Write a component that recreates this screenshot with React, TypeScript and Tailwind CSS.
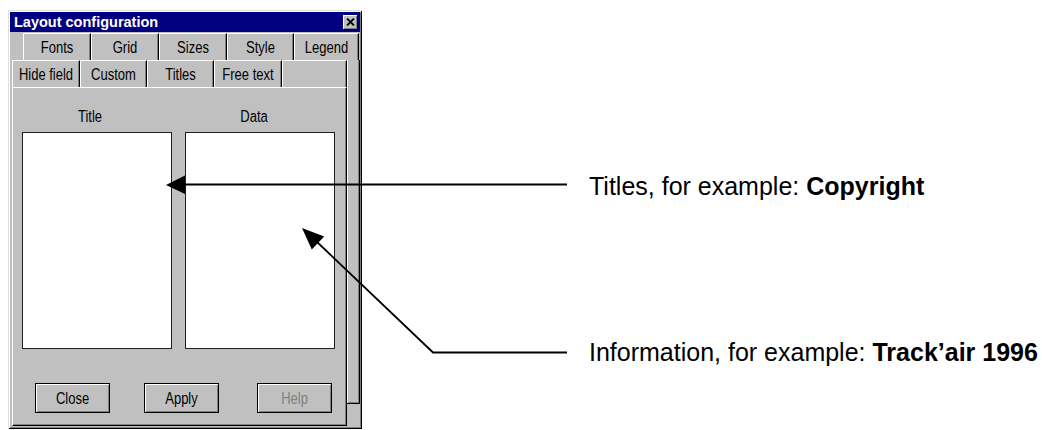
import React from 'react';

const bevelOut = 'shadow-[inset_1px_1px_0_#ffffff,inset_-1px_-1px_0_#808080]';
const dlgText = 'inline-block text-[13px] leading-none scale-y-[1.25]';

const Tab: React.FC<{ label: string; w: string; active?: boolean }> = ({ label, w, active }) => (
  <div
    className={`${w} h-full flex items-center justify-center border-t border-l border-white border-r border-r-black shadow-[inset_-1px_0_0_#808080] ${
      active ? 'bg-[#c0c0c0] relative z-10 h-[28px]' : ''
    }`}
  >
    <span className={dlgText}>{label}</span>
  </div>
);

const Button: React.FC<{ label: string; disabled?: boolean; className?: string }> = ({ label, disabled, className }) => (
  <div
    className={`w-[75px] h-[30px] border border-black flex items-center justify-center ${bevelOut} ${className ?? ''}`}
  >
    <span className={`${dlgText} ${disabled ? 'text-[#808080]' : 'text-black'}`}>{label}</span>
  </div>
);

export default function App() {
  return (
    <div
      className="relative w-[1042px] h-[430px] bg-white flex overflow-hidden"
      style={{ fontFamily: '"Liberation Sans", Arial, sans-serif' }}
    >
      {/* dialog */}
      <div className="mt-[10px] ml-[8px] w-[354px] h-[419px] bg-[#c0c0c0] p-[2px] flex flex-col shadow-[inset_1px_1px_0_#dfdfdf,inset_-1px_-1px_0_#000000,inset_2px_2px_0_#ffffff,inset_-2px_-2px_0_#808080]">
        <div className="h-[20px] bg-[#000080] flex items-center justify-between pl-[4px] pr-[2px]">
          <span className="text-white font-bold text-[14.5px] leading-none">Layout configuration</span>
          <div className={`w-[15px] h-[15px] bg-[#c0c0c0] flex items-center justify-center ${bevelOut} border-r border-b border-black`}>
            <svg width="9" height="8" viewBox="0 0 9 8">
              <path d="M1 0.5 L8 7.5 M8 0.5 L1 7.5" stroke="#000" strokeWidth="1.8" />
            </svg>
          </div>
        </div>

        {/* back tab row */}
        <div className="mt-[1px] h-[27px] flex pl-[13px] text-black">
          <Tab label="Fonts" w="w-[68px]" />
          <Tab label="Grid" w="w-[68px]" />
          <Tab label="Sizes" w="w-[68px]" />
          <Tab label="Style" w="w-[67px]" />
          <Tab label="Legend" w="w-[65px]" />
        </div>

        <div className="flex pl-[2px]">
          <div className="w-[335px] flex flex-col">
            {/* front tab row */}
            <div className="h-[27px] flex items-start text-black">
              <Tab label="Hide field" w="w-[68px]" />
              <Tab label="Custom" w="w-[67px]" active />
              <Tab label="Titles" w="w-[67px]" />
              <Tab label="Free text" w="w-[68px]" />
              <Tab label="" w="w-[65px]" />
            </div>

            {/* panel */}
            <div className="h-[339px] border-t border-l border-white border-r border-b border-r-black border-b-black shadow-[inset_-1px_-1px_0_#808080] flex flex-col pl-[9px] text-black">
              <div className="mt-[20px] h-[16px] flex">
                <div className="w-[150px] pr-[14px] flex justify-center items-center">
                  <span className={dlgText}>Title</span>
                </div>
                <div className="ml-[14px] w-[150px] pr-[14px] flex justify-center items-center">
                  <span className={dlgText}>Data</span>
                </div>
              </div>
              <div className="mt-[8px] flex gap-[13px]">
                <div className="w-[150px] h-[217px] bg-white border border-[#202020]" />
                <div className="w-[150px] h-[217px] bg-white border border-[#202020]" />
              </div>
              <div className="mt-[34px] flex">
                <Button label="Close" className="ml-[13px]" />
                <Button label="Apply" className="ml-[34px]" />
                <Button label="Help" disabled className="ml-[38px]" />
              </div>
            </div>
          </div>
          {/* edge of the back panel */}
          <div className="w-[13px] h-[344px] border-r border-b border-black shadow-[inset_1px_0_0_#ffffff,inset_-1px_-1px_0_#808080]" />
        </div>
      </div>

      {/* annotations */}
      <div className="ml-[227px] flex flex-col text-black text-[25px] leading-[30px] whitespace-nowrap">
        <div className="mt-[171px]">
          Titles, for example: <span className="font-bold">Copyright</span>
        </div>
        <div className="mt-[136px]">
          Information, for example: <span className="font-bold">Track’air 1996</span>
        </div>
      </div>

      <svg className="absolute inset-0 pointer-events-none" width="1042" height="430" viewBox="0 0 1042 430">
        <line x1="183" y1="184.5" x2="567" y2="184.5" stroke="#000" strokeWidth="1.8" />
        <polygon points="166,185 185,175.5 185,194" fill="#000" />
        <polyline points="316,241 433,352.5 567,352.5" fill="none" stroke="#000" strokeWidth="1.8" />
        <polygon points="302,228 324.2,236.6 311.8,249.6" fill="#000" />
      </svg>
    </div>
  );
}
